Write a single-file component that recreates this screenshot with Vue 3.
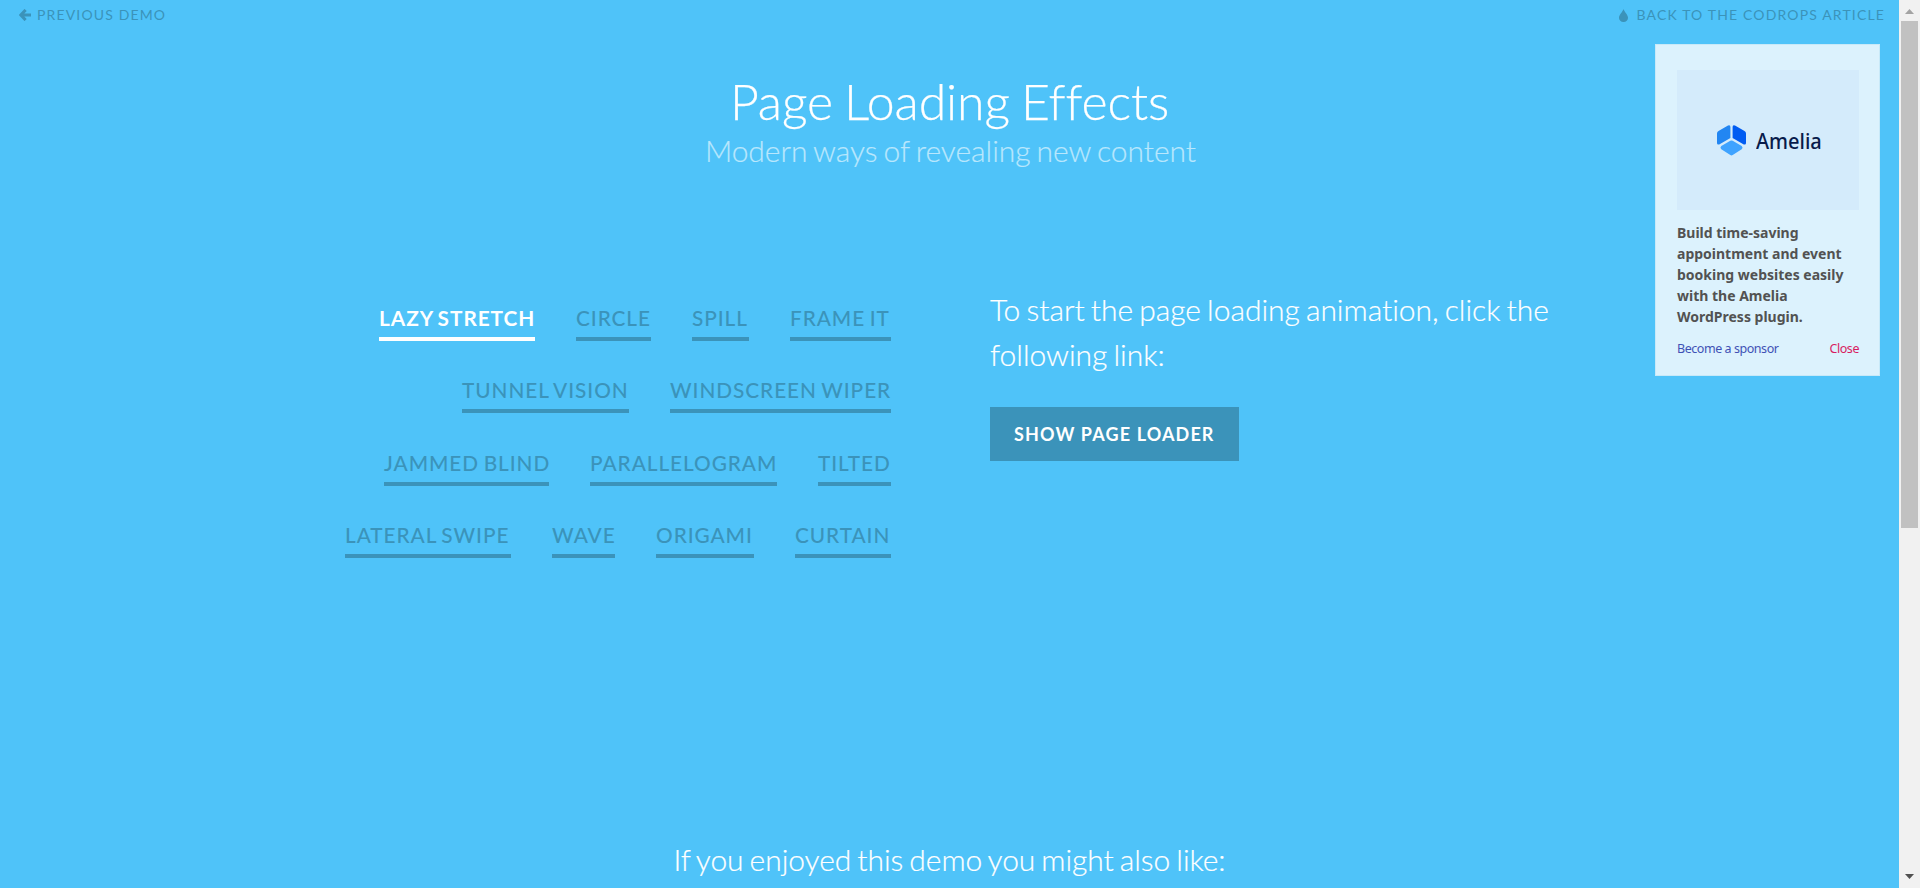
<script setup>
const rows = [
  [{ name: 'Lazy Stretch', width: 156 }, { name: 'Circle', width: 75 }, { name: 'Spill', width: 57 }, { name: 'Frame It', width: 101 }],
  [{ name: 'Tunnel Vision', width: 167 }, { name: 'Windscreen Wiper', width: 221 }],
  [{ name: 'Jammed Blind', width: 165 }, { name: 'Parallelogram', width: 187 }, { name: 'Tilted', width: 73 }],
  [{ name: 'Lateral Swipe', width: 166 }, { name: 'Wave', width: 63 }, { name: 'Origami', width: 98 }, { name: 'Curtain', width: 96 }],
]
const active = 'Lazy Stretch'
</script>

<template>
  <div class="window">
    <div class="page">
      <nav class="top">
        <a class="top-link">
          <svg width="12" height="12" viewBox="0 0 12 12"><path d="M6.6 .9 1.8 6l4.8 5.1M2 6h10" fill="none" stroke="currentColor" stroke-width="3" /></svg>
          <span>Previous Demo</span>
        </a>
        <a class="top-link">
          <svg class="drop" width="9" height="13" viewBox="0 0 9 13"><path d="M4.5 0C5.2 2.8 9 5.6 9 8.7A4.4 4.2 0 0 1 4.5 13 4.4 4.2 0 0 1 0 8.7C0 5.6 3.8 2.8 4.5 0Z" fill="currentColor" /></svg>
          <span>Back to the Codrops Article</span>
        </a>
      </nav>
      <header class="head">
        <h1>Page Loading Effects</h1>
        <p>Modern ways of revealing new content</p>
      </header>
      <main class="columns">
        <div class="demos">
          <div v-for="(row, i) in rows" :key="i" class="demo-row">
            <a v-for="demo in row" :key="demo.name" class="demo" :class="{ active: demo.name === active }" :style="{ width: demo.width + 'px' }">{{ demo.name }}</a>
          </div>
        </div>
        <div class="intro">
          <p>To start the page loading animation, click the following link:</p>
          <a class="button">Show Page Loader</a>
        </div>
      </main>
      <section class="related">If you enjoyed this demo you might also like:</section>
      <aside class="ad">
        <div class="ad-image">
          <svg width="29" height="31" viewBox="0 0 29 31">
            <path d="M1.5 6 11 .6Q13.4-.3 13.4 2V13L2.2 19.4Q0 20 0 18V8.5Q0 6.8 1.5 6Z" fill="#2286f2" />
            <path d="M27.5 6 18 .6Q15.6-.3 15.6 2V13L26.8 19.4Q29 20 29 18V8.5Q29 6.8 27.5 6Z" fill="#005cf2" />
            <path d="M13.3 15.8Q14.5 15.2 15.7 15.8L24.7 20.9Q26.5 22.5 24.7 24.2L15.7 30Q14.5 30.9 13.3 30L4.3 24.2Q2.5 22.5 4.3 20.9Z" fill="#3fa3ff" />
          </svg>
          <span>Amelia</span>
        </div>
        <p>Build time-saving appointment and event booking websites easily with the Amelia WordPress plugin.</p>
        <div class="ad-links"><a>Become a sponsor</a><a class="close">Close</a></div>
      </aside>
    </div>
    <div class="scrollbar">
      <svg width="9" height="5" viewBox="0 0 9 5"><path d="M0 5 4.5 0 9 5Z" fill="#a3a3a3" /></svg>
      <div class="thumb"></div>
      <svg class="down" width="9" height="5" viewBox="0 0 9 5"><path d="M0 0 4.5 5 9 0Z" fill="#505050" /></svg>
    </div>
  </div>
</template>

<style>
body { overflow: hidden; }
</style>

<style scoped>
* { box-sizing: border-box; }
.window { display: flex; height: 888px; font-family: Lato, sans-serif; font-variant-ligatures: none; background: #4fc3f9; }
.page { position: relative; flex: 1; height: 888px; overflow: hidden; color: #fff; }
.top { display: flex; justify-content: space-between; height: 30px; padding: 0 14px 0 19px; color: #3b93ba; text-transform: uppercase; font-size: 14px; line-height: 30px; letter-spacing: 1.15px; }
.top-link { display: flex; align-items: center; gap: 6px; }
.top-link .drop { margin-right: 2px; }
.head { padding-top: 40px; text-align: center; }
h1 { margin: 0; font-weight: 300; font-size: 50px; line-height: 62px; letter-spacing: -.1px; word-spacing: -2.5px; -webkit-text-stroke: .25px; }
.head p { margin: 0; padding-left: 2px; font-weight: 300; font-size: 30px; line-height: 36px; letter-spacing: -.04px; word-spacing: -2px; color: #b9e7fd; -webkit-text-stroke: .2px; }
.columns { display: grid; grid-template-columns: 891px 1fr; column-gap: 99px; height: 671px; padding-top: 119px; }
.demos { display: flex; flex-direction: column; align-items: flex-end; padding-top: 14px; gap: 32.4px; }
.demo-row { display: flex; gap: 41px; }
.demo { height: 40px; border-bottom: 4px solid #3b93ba; color: #3b93ba; font-size: 20.8px; font-weight: 500; line-height: 33px; letter-spacing: .94px; word-spacing: -1.6px; text-transform: uppercase; white-space: nowrap; }
.demo.active { color: #fff; border-color: #fff; font-weight: 700; }
.intro p { width: 580px; margin: 0 0 30px; font-weight: 300; font-size: 30px; line-height: 45px; letter-spacing: -.03px; word-spacing: -2px; -webkit-text-stroke: .2px; }
.button { display: inline-block; height: 54px; padding: 0 24px; background: #3b93ba; font-weight: 700; font-size: 18px; line-height: 54px; letter-spacing: 1.13px; text-transform: uppercase; }
.related { font-weight: 300; font-size: 30px; line-height: 40px; letter-spacing: -.06px; word-spacing: -2px; text-align: center; -webkit-text-stroke: .2px; }
.ad { position: absolute; top: 44px; right: 19px; width: 225px; height: 332px; padding: 25px 20px 0 21px; background: #dcf2fd; border: 1px solid #c8e9f8; color: #525252; font-family: "Noto Sans", sans-serif; }
.ad-image { display: flex; align-items: center; width: 182px; height: 140px; padding-left: 40px; gap: 10px; background: #d4ebfb; color: #081b4b; }
.ad-image span { font-size: 22px; font-weight: 500; transform: scaleX(.91); transform-origin: left; }
.ad p { margin: 12px 0 11px; font-weight: 700; font-size: 14px; line-height: 21px; }
.ad-links { display: flex; justify-content: space-between; width: 182px; color: #3f51b5; font-size: 12.5px; letter-spacing: -.45px; line-height: 21px; }
.close { color: #d81b60; }
.scrollbar { display: flex; flex-direction: column; align-items: center; width: 21px; background: #f1f1f1; padding: 9px 2px 9px 2px; }
.thumb { width: 17px; height: 507px; margin-top: 7px; background: #c1c1c1; }
.down { margin-top: auto; }
</style>
